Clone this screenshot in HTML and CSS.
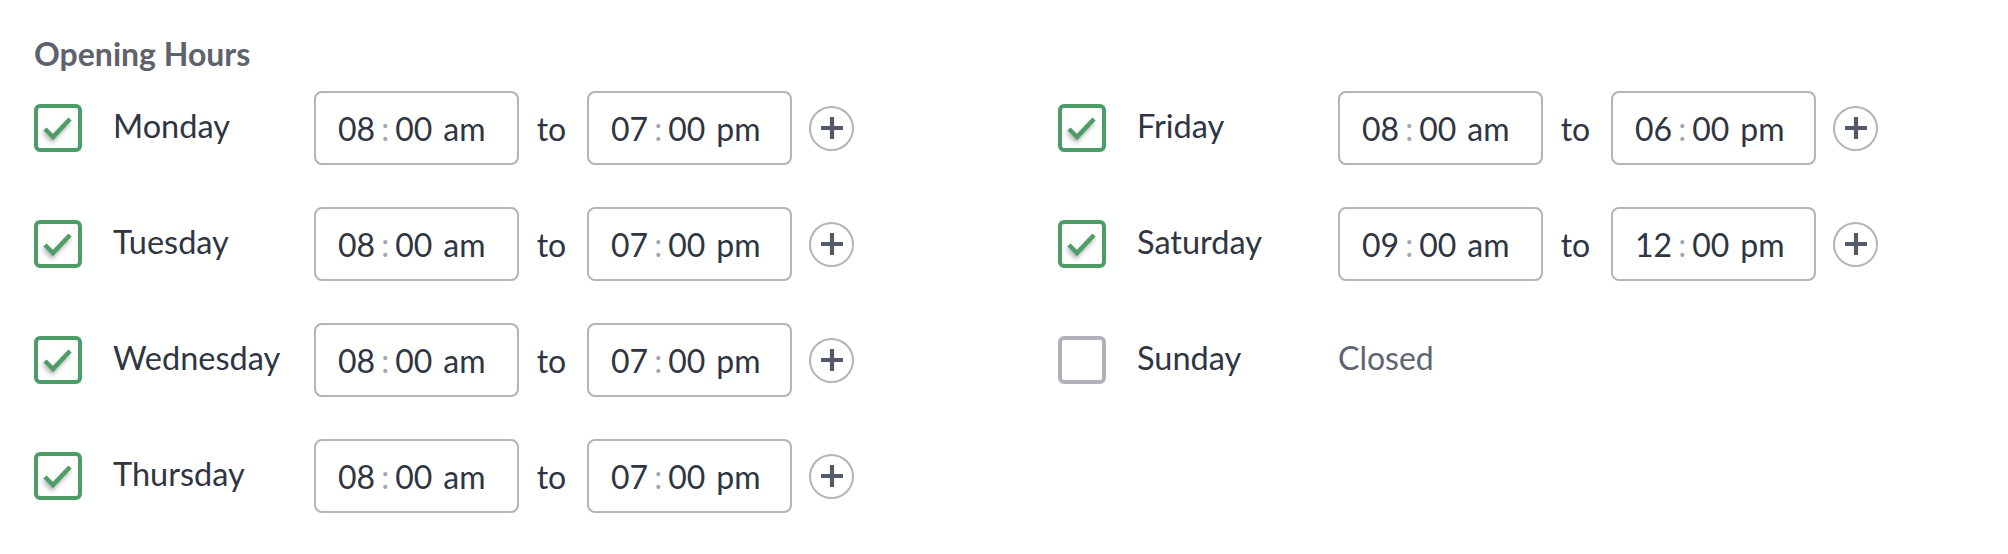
FILE: index.html
```html
<!DOCTYPE html>
<html lang="en">
<head>
    <meta charset="UTF-8">
    <meta name="viewport" content="width=device-width, initial-scale=1.0">
    <title>Opening Hours</title>
    <link rel="stylesheet" href="styles.css">
</head>
<body>
    <div class="hours">
        <h2>Opening Hours</h2>

        <div class="days">
            <!-- Monday -->
            <div class="day">
                <span class="check on"><svg viewBox="0 0 40 40"><path d="M7 21 L15 29 L32 11"/></svg></span>
                <span class="day-name">Monday</span>
                <div class="time"><span>08</span><span class="sep">:</span><span>00</span><span class="ampm">am</span></div>
                <span class="to">to</span>
                <div class="time"><span>07</span><span class="sep">:</span><span>00</span><span class="ampm">pm</span></div>
                <button class="add"><svg viewBox="0 0 24 24"><path d="M12 1 V23 M1 12 H23"/></svg></button>
            </div>

            <!-- Tuesday -->
            <div class="day">
                <span class="check on"><svg viewBox="0 0 40 40"><path d="M7 21 L15 29 L32 11"/></svg></span>
                <span class="day-name">Tuesday</span>
                <div class="time"><span>08</span><span class="sep">:</span><span>00</span><span class="ampm">am</span></div>
                <span class="to">to</span>
                <div class="time"><span>07</span><span class="sep">:</span><span>00</span><span class="ampm">pm</span></div>
                <button class="add"><svg viewBox="0 0 24 24"><path d="M12 1 V23 M1 12 H23"/></svg></button>
            </div>

            <!-- Wednesday -->
            <div class="day">
                <span class="check on"><svg viewBox="0 0 40 40"><path d="M7 21 L15 29 L32 11"/></svg></span>
                <span class="day-name">Wednesday</span>
                <div class="time"><span>08</span><span class="sep">:</span><span>00</span><span class="ampm">am</span></div>
                <span class="to">to</span>
                <div class="time"><span>07</span><span class="sep">:</span><span>00</span><span class="ampm">pm</span></div>
                <button class="add"><svg viewBox="0 0 24 24"><path d="M12 1 V23 M1 12 H23"/></svg></button>
            </div>

            <!-- Thursday -->
            <div class="day">
                <span class="check on"><svg viewBox="0 0 40 40"><path d="M7 21 L15 29 L32 11"/></svg></span>
                <span class="day-name">Thursday</span>
                <div class="time"><span>08</span><span class="sep">:</span><span>00</span><span class="ampm">am</span></div>
                <span class="to">to</span>
                <div class="time"><span>07</span><span class="sep">:</span><span>00</span><span class="ampm">pm</span></div>
                <button class="add"><svg viewBox="0 0 24 24"><path d="M12 1 V23 M1 12 H23"/></svg></button>
            </div>

            <!-- Friday -->
            <div class="day">
                <span class="check on"><svg viewBox="0 0 40 40"><path d="M7 21 L15 29 L32 11"/></svg></span>
                <span class="day-name">Friday</span>
                <div class="time"><span>08</span><span class="sep">:</span><span>00</span><span class="ampm">am</span></div>
                <span class="to">to</span>
                <div class="time"><span>06</span><span class="sep">:</span><span>00</span><span class="ampm">pm</span></div>
                <button class="add"><svg viewBox="0 0 24 24"><path d="M12 1 V23 M1 12 H23"/></svg></button>
            </div>

            <!-- Saturday -->
            <div class="day">
                <span class="check on"><svg viewBox="0 0 40 40"><path d="M7 21 L15 29 L32 11"/></svg></span>
                <span class="day-name">Saturday</span>
                <div class="time"><span>09</span><span class="sep">:</span><span>00</span><span class="ampm">am</span></div>
                <span class="to">to</span>
                <div class="time"><span>12</span><span class="sep">:</span><span>00</span><span class="ampm">pm</span></div>
                <button class="add"><svg viewBox="0 0 24 24"><path d="M12 1 V23 M1 12 H23"/></svg></button>
            </div>

            <!-- Sunday -->
            <div class="day">
                <span class="check"></span>
                <span class="day-name">Sunday</span>
                <span class="closed">Closed</span>
            </div>
        </div>
    </div>
</body>
</html>
```

FILE: styles.css
```css
* {
    margin: 0;
    padding: 0;
    box-sizing: border-box;
}

body {
    font-family: 'Lato', 'Liberation Sans', sans-serif;
    background-color: #fff;
    color: #2f3542;
}

.hours {
    padding: 36px 0 0 34px;
}

h2 {
    font-size: 32px;
    line-height: 36px;
    font-weight: 700;
    color: #5d626c;
    margin-bottom: 19px;
}

.days {
    display: grid;
    grid-template-columns: 1024px 1fr;
    grid-template-rows: repeat(4, 74px);
    grid-auto-flow: column;
    row-gap: 42px;
}

.day {
    display: flex;
    align-items: center;
}

/* checkbox */
.check {
    width: 48px;
    height: 48px;
    border: 4px solid #b1b2b7;
    border-radius: 6px;
    margin-right: 31px;
    flex-shrink: 0;
}

.check.on {
    border-color: #4e9d67;
}

.check svg {
    display: block;
    width: 40px;
    height: 40px;
    fill: none;
    stroke: #4e9d67;
    stroke-width: 4.5;
    filter: drop-shadow(-1px 3px 2px rgba(0, 0, 0, 0.3));
}

.day-name {
    width: 201px;
    font-size: 32.5px;
    padding-bottom: 5px;
}

.time {
    width: 205px;
    height: 74px;
    border: 2px solid #b4b4b9;
    border-radius: 8px;
    padding-left: 22px;
    display: flex;
    align-items: center;
    font-size: 32px;
}

.time .sep {
    color: #a3a6ac;
    margin: 0 6px 0 6px;
}

.time .ampm {
    margin-left: 11px;
}

.to {
    width: 68px;
    text-align: center;
    font-size: 32px;
    padding-right: 3px;
}

.add {
    width: 45px;
    height: 45px;
    margin-left: 17px;
    border: 2px solid #b4b4b9;
    border-radius: 50%;
    background-color: #fff;
    display: flex;
    align-items: center;
    justify-content: center;
    cursor: pointer;
}

.add svg {
    width: 24px;
    height: 24px;
    fill: none;
    stroke: #555b66;
    stroke-width: 4.2;
}

.closed {
    font-size: 32px;
    color: #5f6570;
    padding-bottom: 5px;
}
```
